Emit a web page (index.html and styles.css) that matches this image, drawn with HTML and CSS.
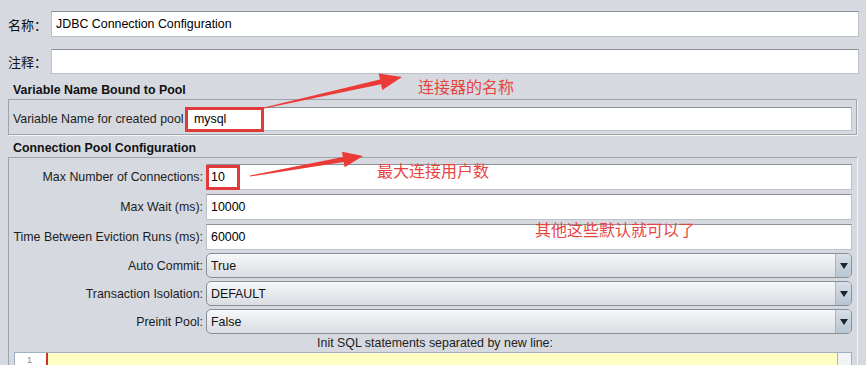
FILE: index.html
```html
<!DOCTYPE html>
<html lang="zh">
<head>
  <meta charset="UTF-8">
  <title>JDBC Connection Configuration</title>
  <link rel="stylesheet" href="styles.css">
</head>
<body>
  <div class="page">
    <div class="top-row">
      <label class="cn-label">名称：</label>
      <div class="text-field">JDBC Connection Configuration</div>
    </div>
    <div class="top-row comment-row">
      <label class="cn-label">注释：</label>
      <div class="text-field"></div>
    </div>

    <!-- Variable name -->
    <div class="group-title first-title">Variable Name Bound to Pool</div>
    <div class="group pool-group">
      <label class="pool-label">Variable Name for created pool</label>
      <div class="text-field">
        mysql
        <span class="mark mark-pool"></span>
      </div>
    </div>

    <!-- Pool settings -->
    <div class="group-title">Connection Pool Configuration</div>
    <div class="group conn-group">
      <div class="form-grid">
        <label>Max Number of Connections:</label>
        <div class="text-field">10<span class="mark mark-max"></span></div>

        <label>Max Wait (ms):</label>
        <div class="text-field">10000</div>

        <label>Time Between Eviction Runs (ms):</label>
        <div class="text-field">60000</div>

        <label class="combo-label">Auto Commit:</label>
        <div class="combo"><span class="combo-text">True</span><span class="combo-btn"></span></div>

        <label class="combo-label">Transaction Isolation:</label>
        <div class="combo"><span class="combo-text">DEFAULT</span><span class="combo-btn"></span></div>

        <label class="combo-label">Preinit Pool:</label>
        <div class="combo"><span class="combo-text">False</span><span class="combo-btn"></span></div>
      </div>
      <div class="sql-caption">Init SQL statements separated by new line:</div>
      <div class="sql-area">
        <div class="gutter">1</div>
        <div class="editor"></div>
        <div class="scroll-up"></div>
      </div>
    </div>
  </div>

  <!-- red notes drawn over the screenshot -->
  <svg class="arrows" width="866" height="365" viewBox="0 0 866 365">
    <polygon points="263.9,107.5 380,79.4 378.7,73.6 402,77 382.3,90 381,84.2 264.1,108.5"/>
    <polygon points="249.9,175.5 342.9,157 342,151.8 363,156 344.6,167.2 343.7,161.9 250.1,176.5"/>
  </svg>
  <div class="note note-name">连接器的名称</div>
  <div class="note note-max">最大连接用户数</div>
  <div class="note note-rest">其他这些默认就可以了</div>
</body>
</html>
```

FILE: styles.css
```css
body {
  margin: 0;
  background-color: #d6d9df;
  font-family: 'Liberation Sans', Arial, 'Noto Sans CJK SC', sans-serif;
  font-size: 12.4px;
  color: #1e1e1e;
  width: 866px;
  height: 365px;
  overflow: hidden;
  position: relative;
}

.page {
  padding: 11px 7px 0 8px;
}

/* name / comment rows */
.top-row {
  display: flex;
  align-items: center;
  height: 26px;
}

.comment-row {
  margin-top: 12px;
  height: 25px;
}

.cn-label {
  width: 43px;
  font-family: 'Noto Sans CJK SC', sans-serif;
  font-size: 13px;
  color: #111;
}

.text-field {
  position: relative;
  flex: 1;
  height: 100%;
  box-sizing: border-box;
  background: #fff;
  border: 1px solid #bdc1c8;
  border-top-color: #8c9098;
  padding-left: 4px;
  display: flex;
  align-items: center;
  color: #000;
}

/* titled groups */
.group-title {
  font-weight: bold;
  margin: 6px 0 2px 5px;
  line-height: 14px;
  color: #111;
}

.first-title {
  margin-top: 9px;
}

.group {
  border: 1px solid #9fa3aa;
  box-shadow: 1px 1px 0 #f4f5f7;
  margin-right: 2px;
}

.pool-group {
  display: flex;
  align-items: center;
  height: 24px;
  padding: 7px 4px 3px 4px;
}

.pool-group .text-field {
  padding-left: 8px;
}

.pool-label {
  width: 172px;
  white-space: nowrap;
  color: #222;
}

.conn-group {
  padding: 6px 5px 0 0;
  border-right: none;
  border-bottom: none;
  height: 220px;
}

.form-grid {
  display: grid;
  grid-template-columns: 194px 1fr;
  grid-template-rows: 26px 27px 27px 25px 25px 25px;
  column-gap: 3px;
  row-gap: 3px;
  align-items: center;
}

.form-grid label {
  text-align: right;
  white-space: nowrap;
  color: #1c1c1c;
}

.form-grid .text-field {
  height: 26px;
}

/* combo boxes */
.combo {
  height: 25px;
  box-sizing: border-box;
  border: 1px solid #8a8f97;
  border-radius: 5px;
  background: linear-gradient(#f7f8fa, #e6e8ec 55%, #d9dce2);
  display: flex;
  align-items: center;
  overflow: hidden;
}

.combo-text {
  flex: 1;
  padding-left: 4px;
  color: #111;
}

.combo-btn {
  width: 15px;
  height: 100%;
  border-left: 1px solid #a9b2bd;
  background: linear-gradient(#d8e0e8, #b7c4d2);
  position: relative;
}

.combo-btn::after {
  content: '';
  position: absolute;
  left: 4px;
  top: 9px;
  border-left: 4px solid transparent;
  border-right: 4px solid transparent;
  border-top: 6px solid #1c2330;
}

/* init sql */
.sql-caption {
  text-align: center;
  margin: 2px 0 0 9px;
  line-height: 14px;
  color: #222;
}

.sql-area {
  display: flex;
  height: 20px;
  margin: 2px 0 0 5px;
  border: 1px solid #9fb0c4;
  border-bottom: none;
}

.gutter {
  width: 31px;
  background: #fff;
  color: #8a8a8a;
  font-size: 9px;
  line-height: 9px;
  padding: 3px 0 0 12px;
  box-sizing: border-box;
}

.editor {
  flex: 1;
  background: #ffffc4;
  border-left: 2px solid #d1302a;
}

.scroll-up {
  width: 13px;
  background: #f2f3f5;
  border-left: 1px solid #b0b5bd;
}

/* red annotations */
.mark {
  position: absolute;
  border: 3px solid #e2393a;
  box-sizing: border-box;
}

.mark-pool {
  left: -1px;
  top: -1px;
  width: 79px;
  height: 25px;
}

.mark-max {
  left: -1px;
  top: 0;
  width: 34px;
  height: 25px;
}

.arrows {
  position: absolute;
  left: 0;
  top: 0;
  pointer-events: none;
}

.arrows polygon {
  fill: #ec3b36;
}

.note {
  position: absolute;
  font-family: 'Noto Sans CJK SC', sans-serif;
  font-size: 16px;
  line-height: 18px;
  color: #e8443e;
  white-space: nowrap;
}

.note-name {
  left: 418px;
  top: 77px;
}

.note-max {
  left: 377px;
  top: 161px;
}

.note-rest {
  left: 535px;
  top: 220px;
}
```
